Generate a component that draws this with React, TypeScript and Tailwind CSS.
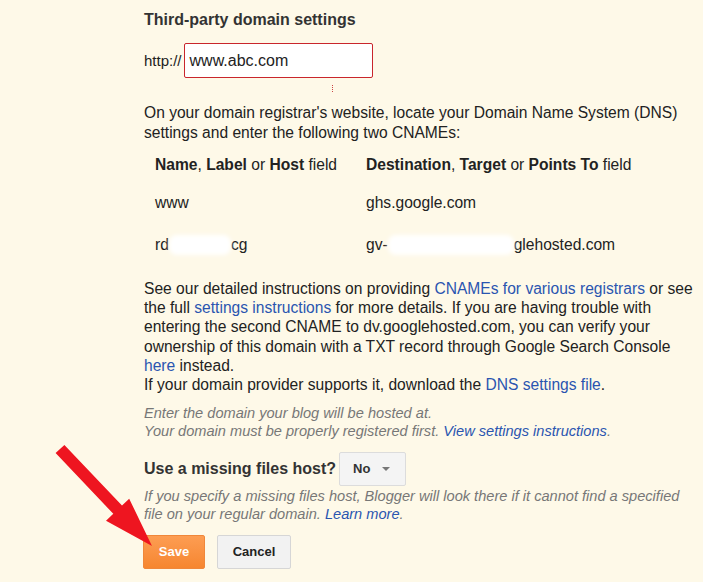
import React from "react";

export default function App() {
  return (
    <div
      className="relative w-[703px] h-[582px] overflow-hidden bg-[#fef9e8] text-[#222]"
      style={{ fontFamily: '"Liberation Sans", Arial, sans-serif' }}
    >
      <div className="flex flex-col pl-[144px] pr-[8px] pt-[10px]">
        <h2 className="text-[16px] font-bold leading-[20px] text-[#333]">Third-party domain settings</h2>

        <div className="flex items-center mt-[13px]">
          <span className="text-[15px] leading-[20px] mr-[2px]">http://</span>
          <div className="w-[189px] h-[35px] border border-[#c9262c] rounded-[2px] bg-white flex items-center px-[5px] text-[16px]">
            www.abc.com
          </div>
        </div>
        <div className="ml-[188px] mt-[7px] w-px h-[7px] border-l border-dotted border-[#c44]" />

        <p className="mt-[11px] text-[15.6px] leading-[19.5px]">
          On your domain registrar's website, locate your Domain Name System (DNS) settings and enter the following two CNAMEs:
        </p>

        <div className="grid grid-cols-[222px_1fr] text-[15.6px] leading-[20px] mt-[13px]">
          <div className="pl-[11px]">
            <b>Name</b>, <b>Label</b> or <b>Host</b> field
          </div>
          <div>
            <b>Destination</b>, <b>Target</b> or <b>Points To</b> field
          </div>
          <div className="pl-[11px] mt-[18px]">www</div>
          <div className="mt-[18px]">ghs.google.com</div>
          <div className="pl-[11px] mt-[22px] flex items-center">
            <span>rd</span>
            <span className="inline-block w-[62px] h-[20px] bg-white rounded-[8px] blur-[2px]" />
            <span>cg</span>
          </div>
          <div className="mt-[22px] flex items-center">
            <span>gv-</span>
            <span className="inline-block w-[126px] h-[20px] bg-white rounded-[8px] blur-[2px]" />
            <span>glehosted.com</span>
          </div>
        </div>

        <p className="mt-[24px] text-[15.6px] leading-[19.2px]">
          See our detailed instructions on providing <a className="text-[#2a55b0]">CNAMEs for various registrars</a> or see the full{" "}
          <a className="text-[#2a55b0]">settings instructions</a> for more details. If you are having trouble with entering the second CNAME to
          dv.googlehosted.com, you can verify your ownership of this domain with a TXT record through Google Search Console{" "}
          <a className="text-[#2a55b0]">here</a> instead.
          <br />
          If your domain provider supports it, download the <a className="text-[#2a55b0]">DNS settings file</a>.
        </p>

        <p className="mt-[10px] text-[14.6px] leading-[18px] italic text-[#777]">
          Enter the domain your blog will be hosted at.
          <br />
          Your domain must be properly registered first. <a className="text-[#2a55b0]">View settings instructions</a>.
        </p>

        <div className="flex items-center mt-[12px]">
          <span className="text-[16px] font-bold text-[#333]">Use a missing files host?</span>
          <div className="ml-[3px] w-[67px] h-[34px] border border-[#dcdcdc] bg-[#f4f4f4] rounded-[2px] flex items-center pl-[13px] gap-[12px]">
            <span className="text-[13px] font-bold text-[#333]">No</span>
            <span className="w-0 h-0 border-l-[4px] border-r-[4px] border-t-[4px] border-l-transparent border-r-transparent border-t-[#777]" />
          </div>
        </div>

        <p className="mt-[1px] text-[14.6px] leading-[18px] italic text-[#777]">
          If you specify a missing files host, Blogger will look there if it cannot find a specified file on your regular domain.{" "}
          <a className="text-[#2a55b0]">Learn more</a>.
        </p>

        <div className="flex mt-[12px] gap-[12px] -ml-px">
          <button className="w-[62px] h-[34px] rounded-[2px] border border-[#f0873a] bg-gradient-to-b from-[#fd9d52] to-[#f6862f] text-white text-[13px] font-bold">
            Save
          </button>
          <button className="w-[74px] h-[34px] rounded-[2px] border border-[#d6d6d6] bg-[#f2f2f2] text-[#222] text-[13px] font-bold">
            Cancel
          </button>
        </div>
      </div>

      <svg className="absolute left-0 top-0 pointer-events-none" width="703" height="582" viewBox="0 0 703 582">
        <polygon
          points="64.4,444.9 122,505.6 129.2,498.7 152,546 106,520.7 113.3,513.8 55.6,453.1"
          fill="#ee1520"
        />
      </svg>
    </div>
  );
}
